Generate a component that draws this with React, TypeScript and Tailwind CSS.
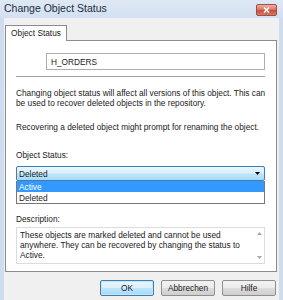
import { useState } from 'react'

const FONT = "font-['Liberation_Sans',Arial,sans-serif]"

function Button({ label, primary }: { label: string; primary?: boolean }) {
  return (
    <button
      className={`h-[16px] w-[54px] rounded-[2px] border text-[8.3px] text-[#1a1a1a] ${
        primary
          ? 'border-[#3c7fb1] bg-[linear-gradient(#eaf6fd,#d9f0fc_50%,#bee6fd_50%,#a7d9f5)] shadow-[inset_0_0_0_1px_#c5e6f9]'
          : 'border-[#8e8f8f] bg-[linear-gradient(#f2f2f2,#ebebeb_50%,#dddddd_50%,#cfcfcf)]'
      }`}
    >
      {label}
    </button>
  )
}

export default function App() {
  const [status] = useState('Deleted')

  return (
    <div className={`flex h-[300px] w-[283px] flex-col overflow-hidden bg-[#cddcee] ${FONT}`}>
      {/* title bar */}
      <div className="flex h-[18px] shrink-0 items-center justify-between bg-[linear-gradient(#dfe9f5,#d2e0f1)] pl-[4px] pr-[6px]">
        <span className="text-[10.5px] font-normal text-[#1e2a3a]">Change Object Status</span>
        <button className="mt-[1px] flex h-[12px] w-[21px] items-center justify-center rounded-[2px] border border-[#9a5048] bg-[linear-gradient(#eeb0a2,#d9705c_50%,#c74a38_50%,#d57a64)]">
          <svg width="7" height="6" viewBox="0 0 7 6">
            <path d="M1 0.5 L6 5.5 M6 0.5 L1 5.5" stroke="#fff" strokeWidth="1.6" />
          </svg>
        </button>
      </div>

      <div className="mx-[4px] flex flex-1 flex-col bg-[#f0f0f0] pt-[7px]">
        {/* tab header */}
        <div className="ml-[1px] flex">
          <div className="relative z-10 -mb-px flex h-[16px] w-[62px] items-center justify-center border border-b-0 border-[#898c95] bg-white text-[8.3px] text-[#1a1a1a]">
            Object Status
          </div>
        </div>

        {/* tab panel */}
        <div className="ml-[1px] mr-[2px] flex h-[232px] flex-col border border-[#898c95] bg-white pl-[10px] pr-[11px] text-[8.3px] leading-[10px] text-[#1a1a1a]">
          <div className="mt-[12px] ml-[30px] flex h-[17px] items-center border border-[#abadb3] pl-[4px]">
            H_ORDERS
          </div>
          <div className="mt-[6px] h-px bg-[#a0a0a0]" />

          <div className="mt-[11px]">
            <div className="whitespace-nowrap">
              Changing object status will affect all versions of this object. This can
            </div>
            <div className="whitespace-nowrap">be used to recover deleted objects in the repository.</div>
          </div>
          <div className="mt-[14px] whitespace-nowrap">
            Recovering a deleted object might prompt for renaming the object.
          </div>

          <div className="mt-[18px]">Object Status:</div>

          <div className="mt-[6px]">
            <div className="flex h-[15px] items-center justify-between rounded-[2px] border border-[#3c7fb1] bg-[linear-gradient(#eaf6fd,#d9f0fc_45%,#bee6fd_55%,#a7d9f5)] pl-[2px] pr-[4px]">
              <span>{status}</span>
              <svg width="5" height="3" viewBox="0 0 5 3">
                <path d="M0 0 H5 L2.5 3 Z" fill="#000" />
              </svg>
            </div>
            <div className="border border-t-0 border-[#767676] bg-white">
              <div className="flex h-[11px] items-center bg-[#3399ff] pl-[2px] text-white">Active</div>
              <div className="flex h-[11px] items-center pl-[2px]">Deleted</div>
            </div>
          </div>

          <div className="mt-[10px]">Description:</div>

          <div className="mt-[3px] flex h-[37px] border border-[#dcdcdc] bg-white">
            <div className="flex-1 pl-[3px] pt-[2px]">
              <div className="whitespace-nowrap">These objects are marked deleted and cannot be used</div>
              <div className="whitespace-nowrap">anywhere. They can be recovered by changing the status to</div>
              <div>Active.</div>
            </div>
            <div className="flex w-[9px] flex-col items-center justify-between py-[4px]">
              <svg width="5" height="3" viewBox="0 0 5 3">
                <path d="M0 3 H5 L2.5 0 Z" fill="#a8a8a8" />
              </svg>
              <svg width="5" height="3" viewBox="0 0 5 3">
                <path d="M0 0 H5 L2.5 3 Z" fill="#a8a8a8" />
              </svg>
            </div>
          </div>
        </div>

        {/* buttons */}
        <div className="mt-[8px] flex justify-end gap-[7px] pr-[3px]">
          <Button label="OK" primary />
          <Button label="Abbrechen" />
          <Button label="Hilfe" />
        </div>
      </div>
    </div>
  )
}
